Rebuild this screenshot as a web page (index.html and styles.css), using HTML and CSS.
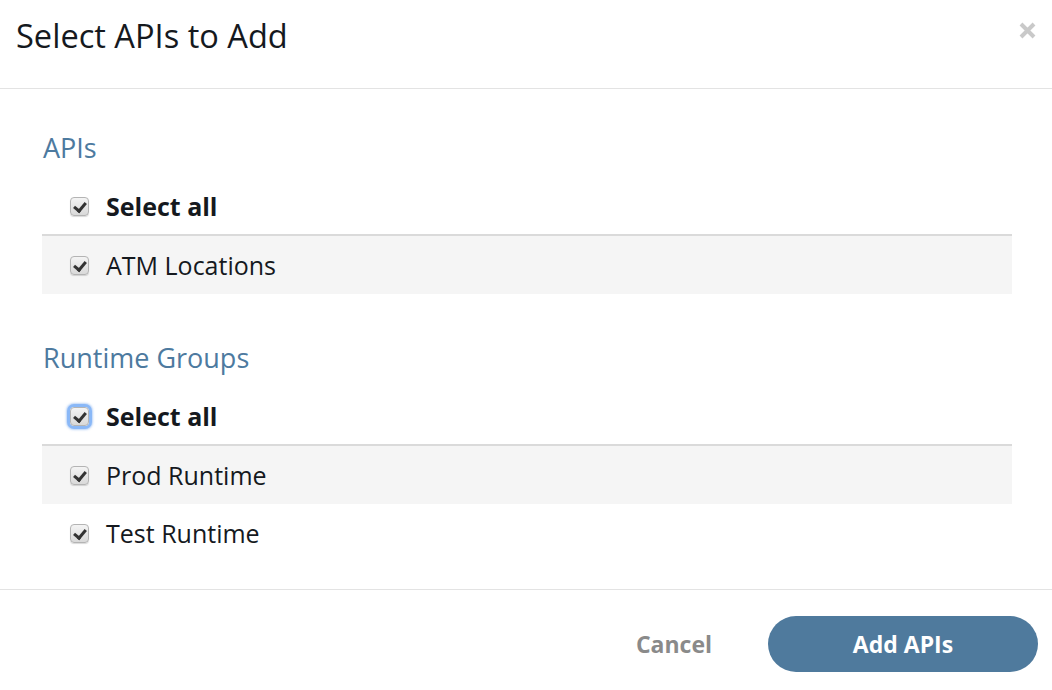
FILE: index.html
```html
<!DOCTYPE html>
<html>
<head>
<meta charset="utf-8">
<link rel="stylesheet" href="styles.css">
</head>
<body>
<div class="modal">
  <header class="modal-header">
    <h1 class="title">Select APIs to Add</h1>
    <button class="close" aria-label="Close">
      <svg width="17" height="17" viewBox="0 0 17 17"><path d="M2 2 L15 15 M15 2 L2 15" stroke="#c9c9c9" stroke-width="4" stroke-linecap="butt"/></svg>
    </button>
  </header>
  <main class="modal-body">
    <section class="group">
      <h2 class="group-title">APIs</h2>
      <div class="row row-all"><span class="cb"></span><span class="label bold">Select all</span></div>
      <div class="row row-alt"><span class="cb"></span><span class="label">ATM Locations</span></div>
    </section>
    <section class="group">
      <h2 class="group-title">Runtime Groups</h2>
      <div class="row row-all"><span class="cb focus"></span><span class="label bold">Select all</span></div>
      <div class="row row-alt"><span class="cb"></span><span class="label">Prod Runtime</span></div>
      <div class="row"><span class="cb"></span><span class="label">Test Runtime</span></div>
    </section>
  </main>
  <footer class="modal-footer">
    <button class="btn-cancel">Cancel</button>
    <button class="btn-primary">Add APIs</button>
  </footer>
</div>
</body>
</html>
```
FILE: styles.css
```css
* { box-sizing: border-box; }
html, body { margin: 0; padding: 0; background: #fff; }
body {
  font-family: "Open Sans", "Liberation Sans", sans-serif;
  color: #15191e;
  width: 1052px;
  height: 690px;
  overflow: hidden;
}
.modal { display: flex; flex-direction: column; height: 690px; }
.modal-header {
  height: 89px;
  border-bottom: 1px solid #e3e3e3;
  display: flex;
  align-items: flex-start;
  justify-content: space-between;
  padding: 0 16px 0 16px;
}
.title {
  margin: 0;
  font-weight: 400;
  font-size: 32.6px;
  line-height: 36px;
  padding-top: 18px;
}
.close {
  border: 0;
  background: none;
  padding: 0;
  margin-top: 22px;
  width: 17px;
  height: 17px;
  display: flex;
}
.modal-body { padding: 41px 40px 27px 42px; border-bottom: 1px solid #e3e3e3; }
.group + .group { margin-top: 46px; }
.group-title {
  margin: 0 0 12px 1px;
  font-weight: 400;
  font-size: 27px;
  line-height: 36px;
  color: #4d7a9f;
}
.row {
  height: 58px;
  display: flex;
  align-items: center;
  padding-left: 28px;
}
.row-all { height: 58px; border-bottom: 2px solid #dadada; }
.row-alt { background: #f5f5f5; }
.cb {
  width: 19px;
  height: 19px;
  border-radius: 4px;
  border: 1px solid #b4b4b4;
  background: linear-gradient(#f4f4f4, #d9d9d9);
  box-shadow: 0 1px 1px rgba(0,0,0,0.15);
  position: relative;
  flex: none;
  margin-right: 17px;
}
.cb::after {
  content: "";
  position: absolute;
  left: 5px;
  top: 2px;
  width: 5px;
  height: 9px;
  border-right: 3px solid #333;
  border-bottom: 3px solid #333;
  transform: rotate(40deg);
}
.cb.focus {
  box-shadow: 0 0 0 3px #8ab8f7, 0 0 2px 4px rgba(120,170,240,0.5);
}
.label { font-size: 25px; line-height: 30px; }
.bold { font-weight: 700; }
.modal-footer {
  flex: 1;
  display: flex;
  justify-content: flex-end;
  align-items: flex-start;
  padding: 26px 14px 0 0;
}
.btn-cancel {
  border: 0;
  background: none;
  font-family: inherit;
  font-weight: 700;
  font-size: 23px;
  color: #8a8a8a;
  height: 56px;
  padding: 0;
  margin-right: 56px;
}
.btn-primary {
  border: 0;
  width: 270px;
  height: 56px;
  border-radius: 28px;
  background: #4f7a9d;
  color: #fff;
  font-family: inherit;
  font-weight: 700;
  font-size: 23px;
}
```
